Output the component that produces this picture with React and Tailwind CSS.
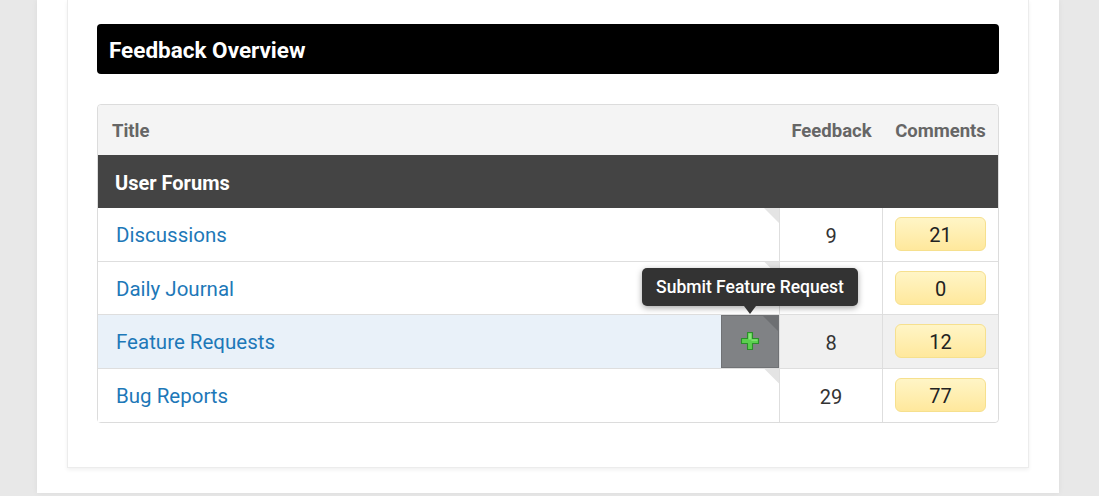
import React from "react";

const rows = [
  { title: "Discussions", feedback: 9, comments: 21 },
  { title: "Daily Journal", feedback: null, comments: 0 },
  { title: "Feature Requests", feedback: 8, comments: 12, active: true },
  { title: "Bug Reports", feedback: 29, comments: 77 },
];

function PlusIcon() {
  return (
    <svg width="22" height="22" viewBox="0 0 22 22">
      <path
        d="M8.5 2.5h5v6h6v5h-6v6h-5v-6h-6v-5h6z"
        fill="#5bd04f"
        stroke="#2b8f2a"
        strokeWidth="1.1"
        strokeLinejoin="round"
      />
      <path d="M9.6 3.6h2.8v6h6v1.2h-6v-1.2h-2.8z" fill="#9ded8d" opacity="0.7" />
    </svg>
  );
}

function DogEar({ dark }) {
  return (
    <span
      className={
        "absolute top-0 right-0 w-[15px] h-[15px] " +
        (dark ? "bg-[#6d6f72]" : "bg-[#e4e4e4]")
      }
      style={{ clipPath: "polygon(0 0, 100% 0, 100% 100%)" }}
    />
  );
}

export default function App() {
  return (
    <div
      className="min-h-screen bg-[#e8e8e8] flex"
      style={{ fontFamily: "Roboto, 'Liberation Sans', sans-serif" }}
    >
      <div className="ml-[37px] w-[1022px] h-[493px] bg-white px-[30px] shadow-[0_0_6px_rgba(0,0,0,0.06)]">
        {/* CARD */}
        <div className="bg-white border border-t-0 border-[#ececec] shadow-[0_2px_4px_rgba(0,0,0,0.06)] px-[29px] pt-[24px] pb-[44px]">

          <div className="h-[50px] bg-black rounded-[4px] flex items-center px-[12px] pt-[3px]">
            <h2 className="text-white font-bold text-[22.5px]">Feedback Overview</h2>
          </div>

          {/* TABLE */}
          <div className="mt-[30px] border border-[#dcdcdc] rounded-[4px]">
            <div className="flex h-[50px] items-center pt-[3px] bg-[#f4f4f4] text-[#666] font-bold text-[18.5px] rounded-t-[4px]">
              <div className="w-[682px] pl-[14px]">Title</div>
              <div className="w-[103px] text-center">Feedback</div>
              <div className="flex-1 text-center">Comments</div>
            </div>

            <div className="h-[53px] bg-[#444] text-white font-bold text-[20px] flex items-center pl-[17px] pt-[2px]">
              User Forums
            </div>

            {rows.map((r, i) => (
              <div
                key={r.title}
                className={
                  "flex h-[53.5px] " +
                  (i < rows.length - 1 ? "border-b border-[#dedede]" : "")
                }
              >
                <div
                  className={
                    "relative w-[682px] flex items-center pl-[18px] pt-[3px] border-r border-[#dedede] " +
                    (r.active ? "bg-[#e9f1f9]" : "bg-white")
                  }
                >
                  <a className="text-[#1d78b8] text-[20.5px]">{r.title}</a>
                  {r.active ? (
                    <div className="absolute right-0 top-0 bottom-0 w-[58px] bg-[#808285] border border-[#707275] flex items-center justify-center">
                      <DogEar dark />
                      <PlusIcon />
                      {/* TOOLTIP */}
                      <div className="absolute bottom-[61px] left-1/2 -translate-x-1/2 w-[216px] h-[38px] pt-[2px] bg-[#333] rounded-[5px] shadow-[0_2px_6px_rgba(0,0,0,0.35)] flex items-center justify-center text-white text-[17.5px] font-medium whitespace-nowrap">
                        Submit Feature Request
                        <span className="absolute left-1/2 -translate-x-1/2 top-full w-0 h-0 border-x-[6px] border-x-transparent border-t-[8px] border-t-[#333]" />
                      </div>
                    </div>
                  ) : (
                    <DogEar />
                  )}
                </div>
                <div
                  className={
                    "w-[103px] flex items-center justify-center pt-[3px] text-[20px] text-[#333] border-r border-[#dedede] " +
                    (r.active ? "bg-[#f0f0f0]" : "bg-white")
                  }
                >
                  {r.feedback}
                </div>
                <div
                  className={
                    "flex-1 flex items-center px-[12px] " +
                    (r.active ? "bg-[#f0f0f0]" : "bg-white") +
                    (i === rows.length - 1 ? " rounded-br-[4px]" : "")
                  }
                >
                  <div className="w-full h-[34px] pt-[2px] rounded-[6px] border border-[#f6e08e] bg-gradient-to-b from-[#fff5c6] to-[#ffe89c] flex items-center justify-center text-[20px] text-[#222]">
                    {r.comments}
                  </div>
                </div>
              </div>
            ))}
          </div>
        </div>
      </div>
    </div>
  );
}
